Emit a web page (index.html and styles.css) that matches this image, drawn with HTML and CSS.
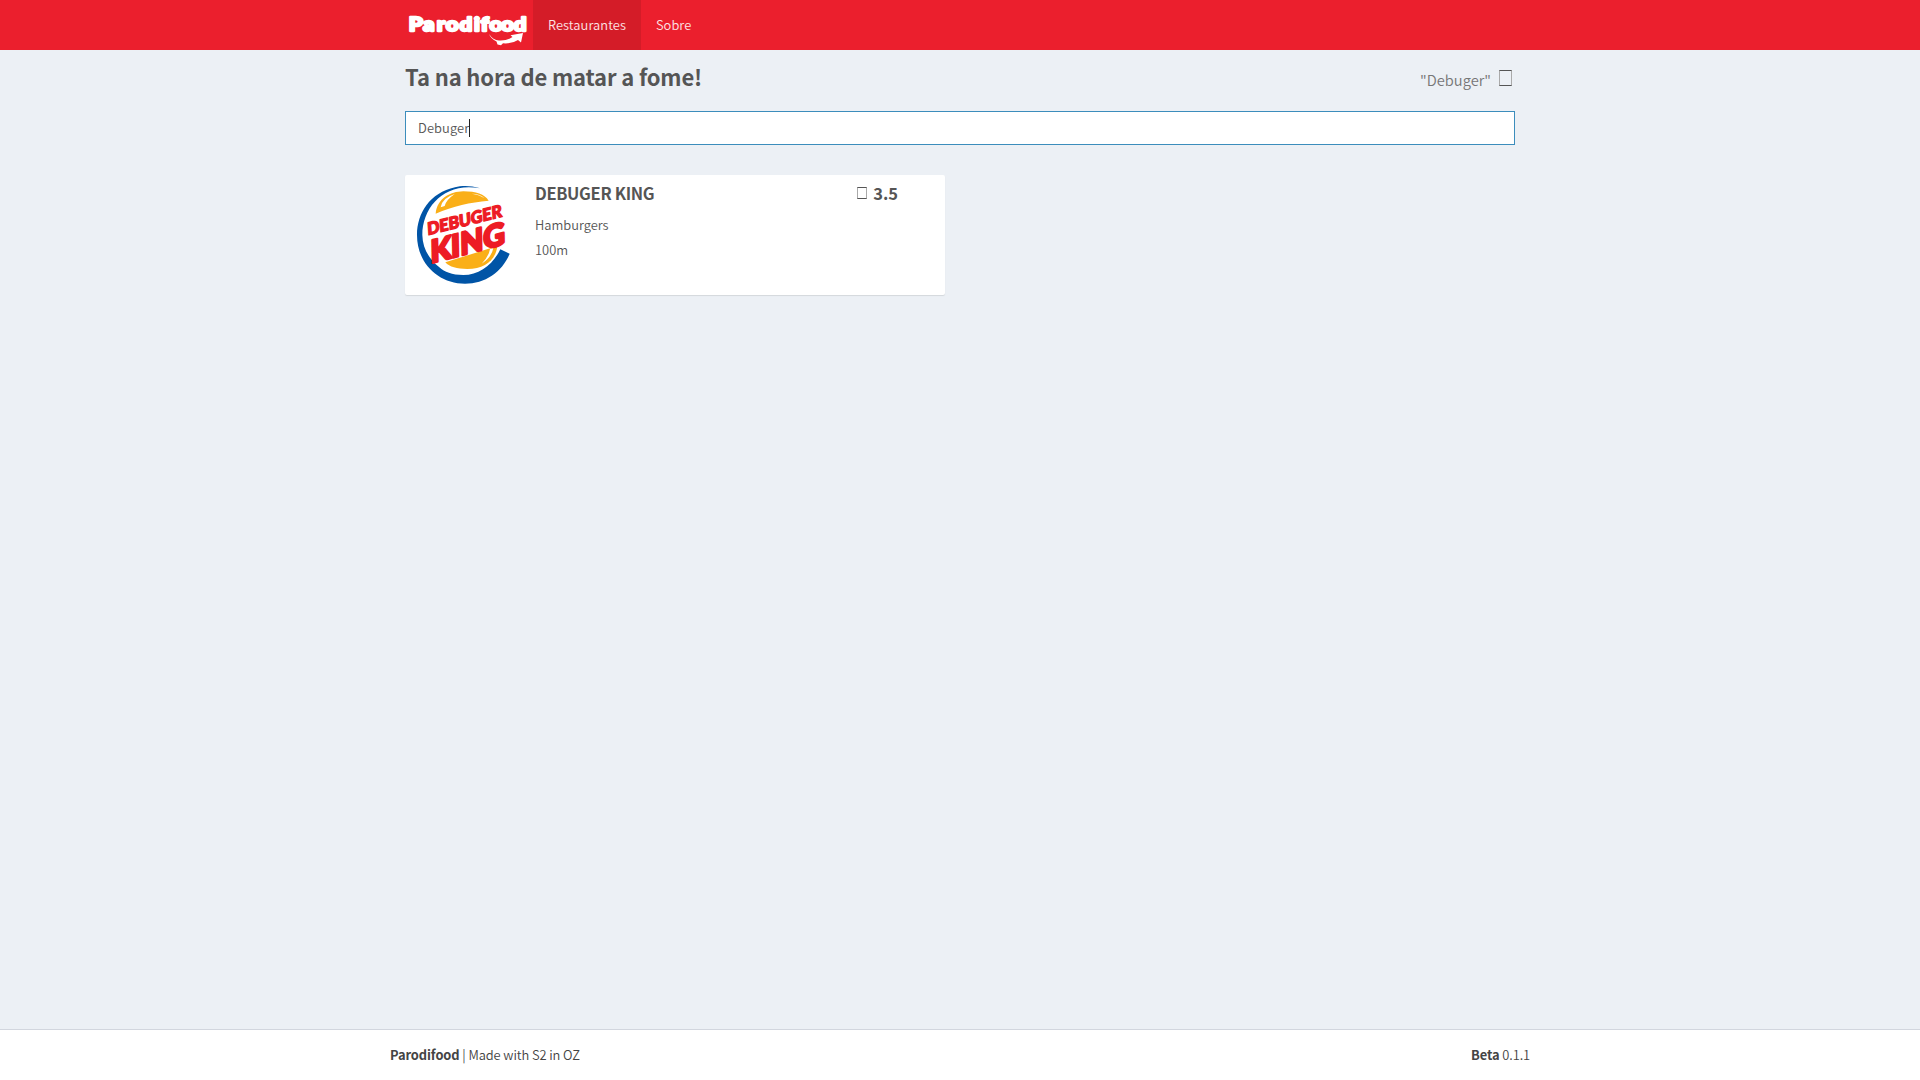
FILE: index.html
```html
<!DOCTYPE html>
<html lang="pt-BR">
<head>
<meta charset="utf-8">
<title>Parodifood</title>
<link rel="stylesheet" href="styles.css">
</head>
<body>
<header class="main-header">
  <nav class="container navbar">
    <a class="brand" href="#">
      <svg width="128" height="50" viewBox="0 0 128 50" role="img" aria-label="Parodifood">
        <text class="wordmark" transform="scale(1.15 1)" y="31.200" font-size="19.500" x="3.200 15.700 27.700 35.500 47.300 60 65.800 73.500 83.500 94.500">Parodifood</text>
        <path fill="#fff" d="M84 34Q88 40 94 40.5Q102 41 107.500 37L105.500 35.300L118 33L116 42.500L113 40Q107 44 98 43.300L96 45.300L92.500 44.500L91.500 41.500Q86 39 84 34Z"/>
      </svg>
    </a>
    <a class="nav-link active" href="#">Restaurantes</a>
    <a class="nav-link" href="#">Sobre</a>
  </nav>
</header>
<main class="container content">
  <section class="content-header">
    <h1>Ta na hora de matar a fome!</h1>
    <div class="search-toggle"><span>"Debuger"</span><i class="glyph-box large"></i></div>
  </section>
  <div class="search-field"><span>Debuger</span><i class="caret"></i></div>
  <article class="place">
    <svg class="place-logo" width="105" height="108" viewBox="0 0 315 324" role="img" aria-label="Debuger King">
      <path fill="#0054a6" d="M210 25C180 16 155 17 135 22C60 38 21 100 21 165C21 250 85 311 165 311C225 311 276 277 299 221L271 208C248 255 208 285 160 285C125 285 104 276 88 262C56 236 38 205 37 165C37 80 105 5 210 25Z"/>
      <path fill="#faaf18" d="M77 101C82 55 120 35 160 34C198 34 224 43 236 62C180 67 130 78 77 101Z"/>
      <path fill="#faaf18" d="M106 247L262 198C258 238 225 267 172 267C140 267 119 261 106 247Z"/>
      <path fill="#fff" d="M92 82Q96 54 134 42Q108 60 104 78ZM185 41Q211 41 224 55Q210 45 185 41ZM250 204Q245 232 215 251Q236 230 240 207Z"/>
      <g class="place-logo-text">
        <text transform="matrix(1 -.25 .07 1 53 166)" font-size="51" textLength="224" lengthAdjust="spacingAndGlyphs" stroke-width="4">DEBUGER</text>
        <text transform="matrix(1 -.26 .02 1 62 250)" font-size="93" textLength="223" lengthAdjust="spacingAndGlyphs" stroke-width="8">KING</text>
      </g>
    </svg>
    <div class="place-info">
      <div class="place-title"><strong>DEBUGER KING</strong><span class="rating"><i class="glyph-box"></i>3.5</span></div>
      <span class="place-meta">Hamburgers</span>
      <span class="place-meta">100m</span>
    </div>
  </article>
</main>
<footer class="main-footer">
  <div class="container footer-row">
    <div><strong>Parodifood</strong> | Made with S2 in OZ</div>
    <div><strong>Beta</strong> 0.1.1</div>
  </div>
</footer>
</body>
</html>
```
FILE: styles.css
```css
* { box-sizing: border-box; }
body {
  margin: 0;
  height: 100vh;
  display: flex;
  flex-direction: column;
  overflow: hidden;
  background: #ecf0f5;
  color: #555;
  font: 350 12.88px/20px "Noto Sans CJK SC", sans-serif;
}
.container { width: 1140px; margin: 0 auto; }
.main-header { background: #eb1f2d; height: 50px; }
.navbar { display: flex; padding-left: 15px; }
.brand { width: 128px; height: 50px; }
.brand svg { display: block; }
.wordmark {
  fill: #fff;
  stroke: #fff;
  stroke-width: 2.3;
  stroke-linejoin: round;
  font-family: Lato, sans-serif;
  font-weight: 900;
}
.nav-link { padding: 15px; color: #fde3e5; text-decoration: none; letter-spacing: .06px; }
.nav-link.active { background: #d41c28; }
.content { flex: 1; padding: 0 15px; }
.content-header { display: flex; justify-content: space-between; height: 61px; padding-top: 15px; }
h1 { margin: -2px 0 0; font-size: 22px; line-height: 26px; font-weight: 700; letter-spacing: -.14px; }
.search-toggle { display: flex; font-size: 14.7px; line-height: 30px; color: #777; padding-right: 3px; }
.glyph-box {
  display: block;
  width: 10px;
  height: 12px;
  border: 1px solid #555;
  border-left-color: #aaa;
  border-right-color: #aaa;
}
.glyph-box.large { width: 13px; height: 16px; margin: 5px 0 0 8px; }
.search-field {
  display: flex;
  align-items: center;
  height: 34px;
  padding: 0 12px;
  background: #fff;
  border: 1px solid #3c8dbc;
}
.search-field span { letter-spacing: .1px; }
.caret { width: 1px; height: 18px; background: #222; }
.place {
  display: flex;
  width: 540px;
  height: 120px;
  margin-top: 30px;
  padding: 5px 10px 5px 5px;
  background: #fff;
  border-radius: 2px;
  box-shadow: 0 1px 1px rgba(0, 0, 0, .1);
}
.place-logo { flex: none; }
.place-logo-text {
  fill: #ed1c24;
  stroke: #ed1c24;
  stroke-linejoin: round;
  font-family: Lato, sans-serif;
  font-weight: 900;
}
.place-info { flex: 1; padding: 3px 0 0 20px; }
.place-title { display: flex; justify-content: space-between; font-size: 16.5px; line-height: 20px; margin-bottom: 12px; }
.place-title strong { letter-spacing: -.35px; }
.rating { display: flex; align-items: center; gap: 6px; font-weight: 700; padding-right: 37px; }
.place-meta { display: block; margin-bottom: 5px; }
.main-footer { height: 51px; padding: 15px 0; background: #fff; border-top: 1px solid #d2d6de; color: #444; }
.footer-row { display: flex; justify-content: space-between; letter-spacing: -.09px; }
strong { font-weight: 700; }
```
